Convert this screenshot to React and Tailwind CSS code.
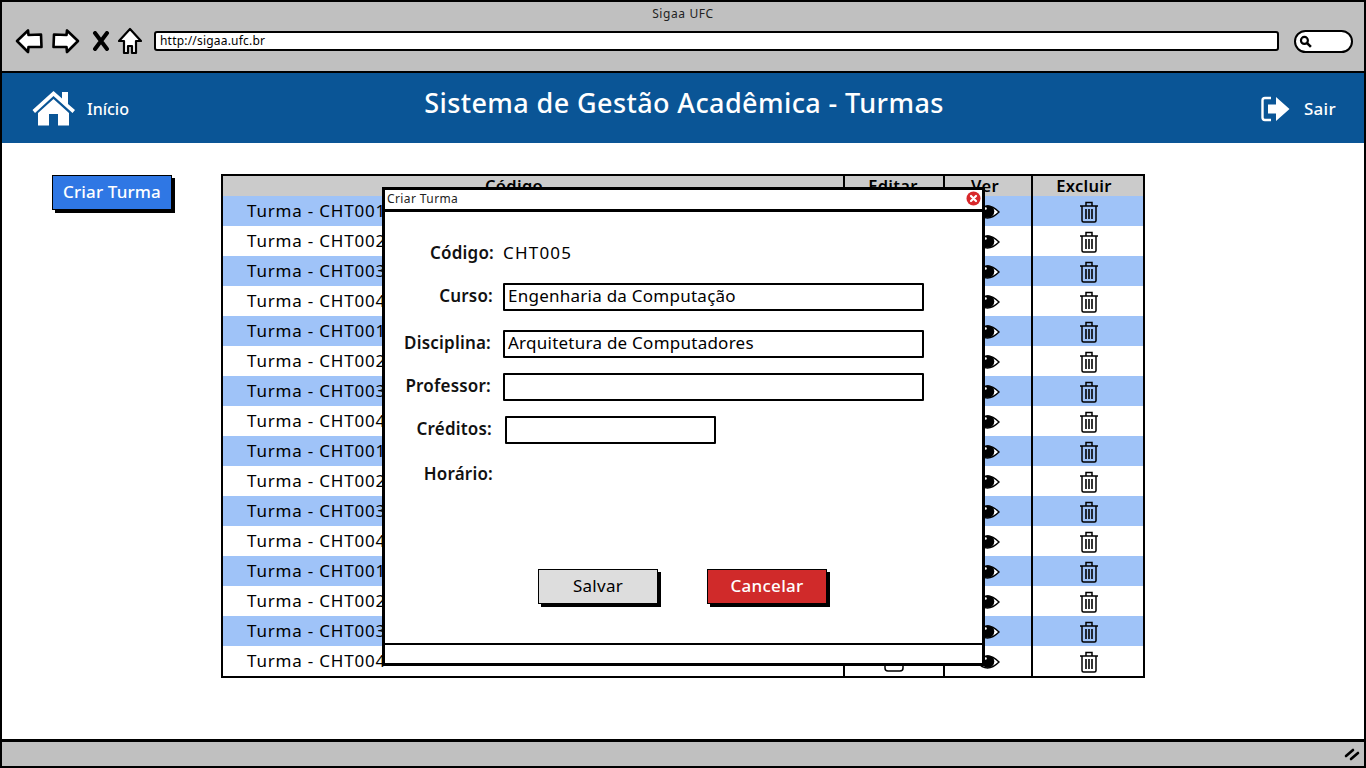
const font = { fontFamily: '"Noto Sans", sans-serif' };

function Back({ flip }) {
  return (
    <svg width="28" height="26" viewBox="0 0 28 26" className={flip ? "-scale-x-100" : ""}>
      <path d="M2 13 L13 2.5 L13.5 7 L26 6.5 L26.5 19 L13.5 19 L13 24 Z" fill="#fff" stroke="#000" strokeWidth="2.6" strokeLinejoin="round" />
    </svg>
  );
}

function Trash() {
  return (
    <svg width="20" height="22" viewBox="0 0 20 22" fill="none" stroke="#000" strokeWidth="1.5">
      <path d="M1 5 H19 M7 4.5 V1.5 H13 V4.5" />
      <path d="M3 5 V19.5 Q3 21 4.5 21 H15.5 Q17 21 17 19.5 V5" />
      <path d="M7 8 V18 M10 8 V18 M13 8 V18" strokeWidth="1.6" />
    </svg>
  );
}

function Eye() {
  return (
    <svg width="24" height="18" viewBox="0 0 24 18">
      <path d="M1 9 Q11 -3 23 9 Q11 21 1 9 Z" fill="#fff" stroke="#000" strokeWidth="1.4" />
      <circle cx="12" cy="8.5" r="6.3" fill="#000" />
      <circle cx="9.5" cy="5.5" r="1.3" fill="#fff" />
    </svg>
  );
}

const Input = ({ value, w = "w-[421px]" }) => (
  <div className={`${w} h-[28px] bg-white border-2 border-black rounded-[1px] flex items-center pl-[3px] pb-[2px] text-[17px] tracking-[0.25px] text-black`}>
    {value}
  </div>
);

const Field = ({ label, mt, lc = "pb-[3px]", children }) => (
  <div className={`flex items-center h-[28px] gap-[8px] ${mt}`}>
    <div className={`w-[110px] text-right font-semibold text-[17px] tracking-[0.2px] text-[#111] ${lc}`}>{label}</div>
    {children}
  </div>
);

const rows = Array.from({ length: 16 }, (_, i) => `Turma - CHT00${(i % 4) + 1}`);

export default function App() {
  return (
    <div style={font} className="relative w-[1366px] h-[768px] bg-white border-2 border-black flex flex-col overflow-hidden text-black">
      {/* browser chrome */}
      <div className="h-[71px] shrink-0 bg-[#c0c0c0] border-b-2 border-black flex flex-col">
        <div className="text-center text-[12px] leading-[16px] pt-[4px] h-[20px] tracking-[0.6px] text-[#222]">Sigaa UFC</div>
        <div className="flex items-center pl-[13px] pr-[11px] mt-[4px] h-[30px]">
          <Back />
          <div className="w-[9px]" />
          <Back flip />
          <svg width="18" height="20" viewBox="0 0 18 20" className="ml-[12px]">
            <path d="M3 2 L15 18 M15 2 L3 18" stroke="#000" strokeWidth="4" strokeLinecap="round" />
          </svg>
          <svg width="24" height="28" viewBox="0 0 24 28" className="ml-[8px]">
            <path d="M12 2 L23 14 L18 14 L18 26 L14 26 L14 19 L10 19 L10 26 L6 26 L6 14 L1 14 Z" fill="#fff" stroke="#000" strokeWidth="2.2" strokeLinejoin="round" />
          </svg>
          <div className="ml-[12px] flex-1 h-[20px] bg-white border-2 border-black rounded-[3px] flex items-center pl-[4px] text-[12px] tracking-[0.2px]">
            http://sigaa.ufc.br
          </div>
          <div className="ml-[15px] w-[59px] h-[23px] bg-white border-2 border-black rounded-full flex items-center pl-[3px]">
            <svg width="13" height="13" viewBox="0 0 12 12" fill="none" stroke="#000">
              <circle cx="5" cy="5" r="3.2" strokeWidth="2" />
              <path d="M7.5 7.5 L11 11" strokeWidth="2.4" />
            </svg>
          </div>
        </div>
      </div>

      {/* app header */}
      <div className="h-[70px] shrink-0 -mx-[2px] bg-[#0a5596] grid grid-cols-[1fr_auto_1fr] items-center pl-[32px] pr-[30px] text-white">
        <div className="flex items-center gap-[12px]">
          <svg width="43" height="36" viewBox="0 0 43 36" fill="#fff">
            <path d="M0.5 20 L21.5 1 L30 8.5 V2 H36 V14 L43 20 L40.5 23 L21.5 6 L3 23 Z" />
            <path d="M6 23 L21.5 9 L37 23 V35.5 H26 V24 H17 V35.5 H6 Z" />
          </svg>
          <span className="text-[16px] font-medium pt-[2px]">Início</span>
        </div>
        <div className="text-[27px] font-medium leading-[34px] pb-[10px] tracking-[0.4px]">Sistema de Gestão Acadêmica - Turmas</div>
        <div className="flex items-center justify-end gap-[14px] pt-[2px]">
          <svg width="29" height="26" viewBox="0 0 29 26">
            <path d="M10 2 H4 Q1.5 2 1.5 4.5 V21.5 Q1.5 24 4 24 H10" fill="none" stroke="#fff" strokeWidth="2.4" />
            <path d="M7 8.5 H15 V1 L28.5 13 L15 25 V17.5 H7 Z" fill="#fff" />
          </svg>
          <span className="text-[17px] font-medium tracking-[0.3px]">Sair</span>
        </div>
      </div>

      {/* page body */}
      <div className="flex-1 flex items-start pt-[31px] pl-[50px]">
        <div className="w-[120px] h-[35px] mt-[1px] mr-[49px] bg-[#2f77e4] border border-black shadow-[3px_3px_0_#000] flex items-center justify-center text-white text-[17px] font-medium tracking-[0.15px] pb-[1px]">
          Criar Turma
        </div>
        <div className="w-[924px] border-2 border-black bg-white">
          <div className="flex h-[20px] bg-[#cbcbcb] text-[16.5px] font-semibold leading-[20px] text-center tracking-[0.3px]">
            <div className="w-[620px] pr-[38px]">Código</div>
            <div className="w-[100px] border-l-2 border-black pr-[2px]">Editar</div>
            <div className="w-[88px] border-l-2 border-black pr-[6px]">Ver</div>
            <div className="flex-1 border-l-2 border-black pr-[8px]">Excluir</div>
          </div>
          {rows.map((r, i) => (
            <div key={i} className={`flex h-[30px] items-center ${i % 2 === 0 ? "bg-[#9fc3f8]" : "bg-white"}`}>
              <div className="w-[620px] pl-[24px] text-[17px] tracking-[0.8px]">{r}</div>
              <div className="w-[100px] h-full border-l-2 border-black flex items-center justify-center">
                <svg width="20" height="22" viewBox="0 0 20 22" fill="none" stroke="#000" strokeWidth="1.5">
                  <rect x="1" y="3" width="18" height="18" rx="3" />
                </svg>
              </div>
              <div className="w-[88px] h-full border-l-2 border-black flex items-center justify-center pt-[2px]">
                <Eye />
              </div>
              <div className="flex-1 h-full border-l-2 border-black flex items-center justify-center pl-[2px] pt-[2px]">
                <Trash />
              </div>
            </div>
          ))}
        </div>
      </div>

      {/* status bar */}
      <div className="h-[27px] shrink-0 bg-[#c0c0c0] border-t-[3px] border-black flex items-center justify-end pr-[4px]">
        <svg width="16" height="14" viewBox="0 0 16 14" stroke="#000" strokeWidth="2.6" strokeLinecap="round">
          <path d="M2 9 L9 3 M7 12 L14 6" />
        </svg>
      </div>

      {/* modal */}
      <div className="absolute left-[380px] top-[185px] w-[603px] h-[479px] bg-white border-[3px] border-black flex flex-col">
        <div className="h-[22px] shrink-0 border-b-[3px] border-black flex items-center justify-between pl-[2px] pr-[1px] pb-[2px] text-[12px] tracking-[0.4px] text-[#222]">
          <span>Criar Turma</span>
          <svg width="15" height="15" viewBox="0 0 15 15">
            <circle cx="7.5" cy="7.5" r="7" fill="#d8282b" />
            <path d="M5 5 L10 10 M10 5 L5 10" stroke="#fff" strokeWidth="2.2" strokeLinecap="round" />
          </svg>
        </div>
        <div className="flex-1 flex flex-col pt-[27px]">
          <Field label="Código:" mt="" lc="pb-[1px] pr-[1px]">
            <span className="text-[17px] tracking-[1.2px] pb-[1px]">CHT005</span>
          </Field>
          <Field label="Curso:" mt="mt-[16px]" lc="pb-[3px] pr-[2px]"><Input value="Engenharia da Computação" /></Field>
          <Field label="Disciplina:" mt="mt-[19px]" lc="pb-[3px] pr-[4px]"><Input value="Arquitetura de Computadores" /></Field>
          <Field label="Professor:" mt="mt-[15px]" lc="pb-[3px] pr-[4px]"><Input value="" /></Field>
          <Field label="Créditos:" mt="mt-[15px]" lc="pb-[3px] pr-[3px]"><div className="ml-[2px]"><Input value="" w="w-[211px]" /></div></Field>
          <Field label="Horário:" mt="mt-[17px]" lc="pb-[3px] pr-[2px]"><span /></Field>
          <div className="flex mt-[80px] pl-[153px] gap-[49px]">
            <div className="w-[120px] h-[35px] bg-[#dddddd] border border-black shadow-[3px_3px_0_#000] flex items-center justify-center text-[17px] tracking-[0.3px] pb-[1px]">Salvar</div>
            <div className="w-[120px] h-[35px] bg-[#d02a2a] border border-black shadow-[3px_3px_0_#000] flex items-center justify-center text-[17px] font-medium tracking-[0.3px] pb-[1px] text-white">Cancelar</div>
          </div>
        </div>
        <div className="h-[20px] shrink-0 border-t-[2px] border-black" />
      </div>
    </div>
  );
}
